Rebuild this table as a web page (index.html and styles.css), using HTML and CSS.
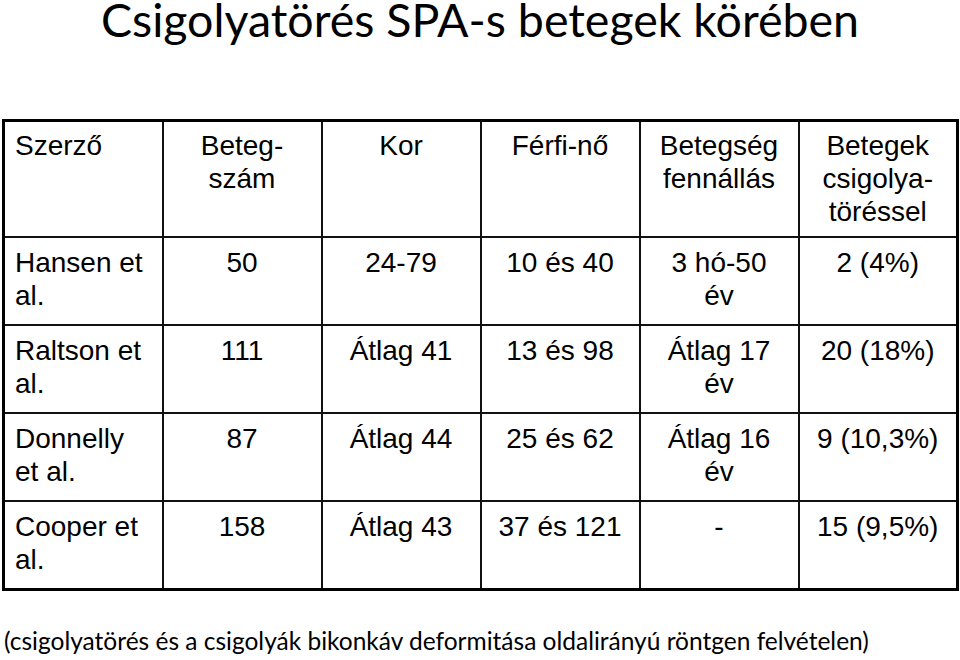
FILE: index.html
```html
<!DOCTYPE html>
<html lang="hu">
<head>
<meta charset="utf-8">
<title>Csigolyatörés SPA-s betegek körében</title>
<link rel="stylesheet" href="styles.css">
</head>
<body>
<div class="slide">
  <h1 class="title">Csigolyatörés SPA-s betegek körében</h1>
  <table class="data">
    <colgroup>
      <col><col><col><col><col><col>
    </colgroup>
    <thead>
      <tr class="head-row">
        <th class="author">Szerző</th>
        <th>Beteg-<br>szám</th>
        <th>Kor</th>
        <th>Férfi-nő</th>
        <th>Betegség<br>fennállás</th>
        <th>Betegek<br>csigolya-<br>töréssel</th>
      </tr>
    </thead>
    <tbody>
      <tr class="body-row r1">
        <td class="author">Hansen et<br>al.</td>
        <td>50</td>
        <td>24-79</td>
        <td>10 és 40</td>
        <td>3 hó-50<br>év</td>
        <td>2 (4%)</td>
      </tr>
      <tr class="body-row">
        <td class="author">Raltson et<br>al.</td>
        <td>111</td>
        <td>Átlag 41</td>
        <td>13 és 98</td>
        <td>Átlag 17<br>év</td>
        <td>20 (18%)</td>
      </tr>
      <tr class="body-row">
        <td class="author">Donnelly<br>et al.</td>
        <td>87</td>
        <td>Átlag 44</td>
        <td>25 és 62</td>
        <td>Átlag 16<br>év</td>
        <td>9 (10,3%)</td>
      </tr>
      <tr class="body-row">
        <td class="author">Cooper et<br>al.</td>
        <td>158</td>
        <td>Átlag 43</td>
        <td>37 és 121</td>
        <td>-</td>
        <td>15 (9,5%)</td>
      </tr>
    </tbody>
  </table>
  <p class="note">(csigolyatörés és a csigolyák bikonkáv deformitása oldalirányú röntgen felvételen)</p>
</div>
</body>
</html>
```

FILE: styles.css
```css
html, body {
  margin: 0;
  padding: 0;
  background: #ffffff;
}

.slide {
  width: 960px;
  height: 660px;
  overflow: hidden;
  background: #ffffff;
  color: #000000;
}

.title {
  margin: 0;
  height: 119px;
  font-family: Lato, "Open Sans", sans-serif;
  font-weight: normal;
  font-size: 46.5px;
  line-height: 38px;
  text-align: center;
  color: #000000;
  box-sizing: border-box;
}

.data {
  margin-left: 2px;
  width: 955px;
  table-layout: fixed;
  border-collapse: collapse;
  border: 3px solid #000000;
  font-family: "Liberation Sans", Arial, sans-serif;
  font-size: 28px;
  line-height: 33px;
  color: #000000;
}

.data col {
  width: 159px;
}

.data th,
.data td {
  border: 2px solid #111111;
  padding: 7px 6px 0;
  vertical-align: top;
  text-align: center;
  font-weight: normal;
}

.data .author {
  text-align: left;
  padding-left: 10px;
}

.head-row th {
  height: 107px;
}

.body-row td {
  height: 78px;
  padding-top: 8px;
}

.note {
  margin: 37px 0 0 4px;
  font-family: Lato, "Open Sans", sans-serif;
  font-size: 24.5px;
  line-height: 26px;
  color: #000000;
  white-space: nowrap;
}
```
